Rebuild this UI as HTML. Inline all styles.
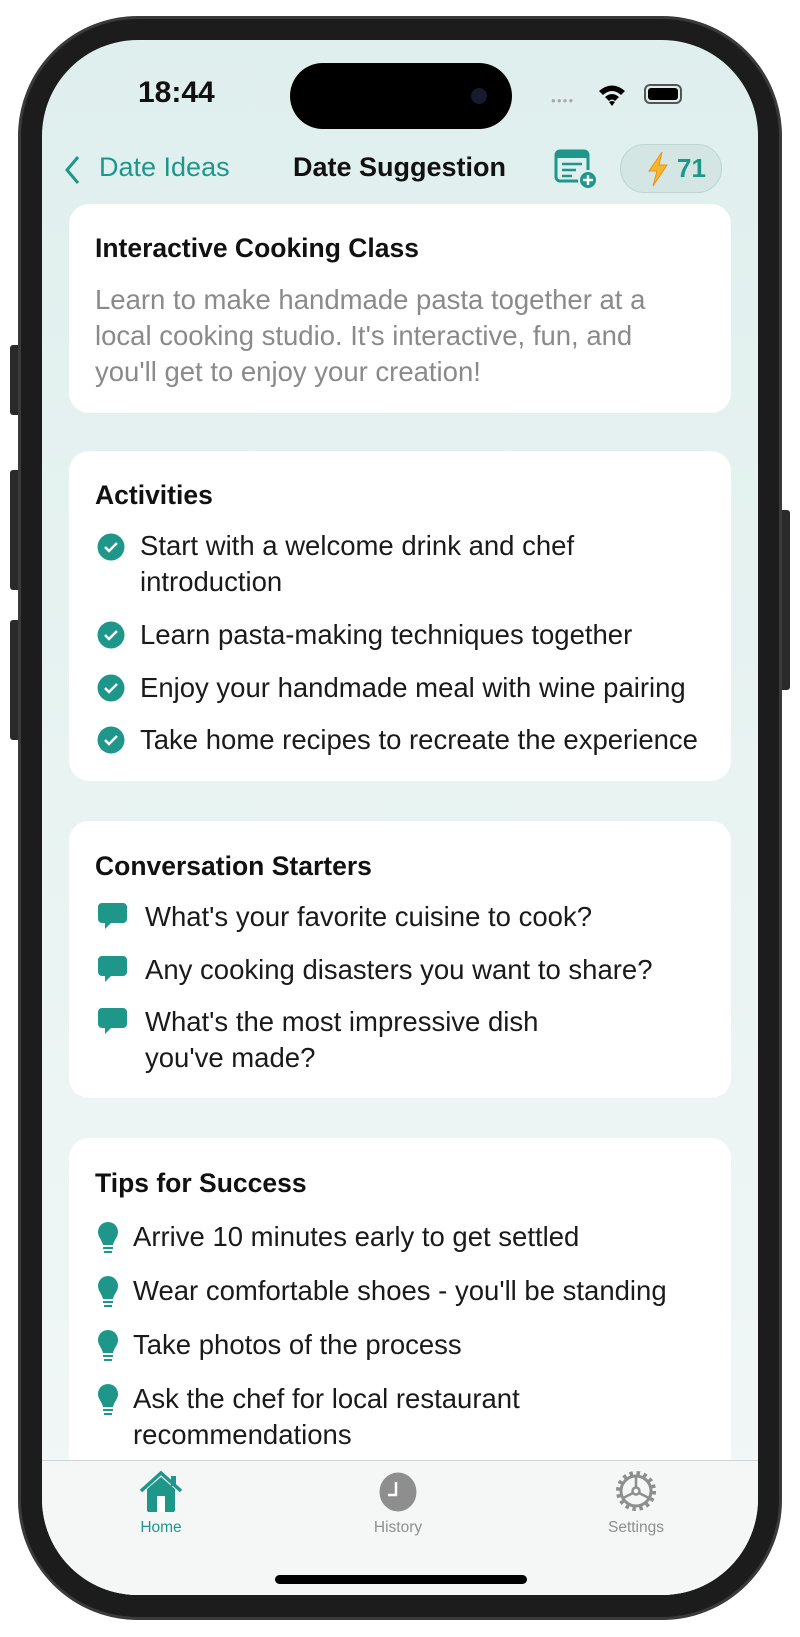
<!DOCTYPE html>
<html><head><meta charset="utf-8"><style>
*{margin:0;padding:0;box-sizing:border-box}
body{width:800px;height:1637px;background:#fff;position:relative;overflow:hidden;font-family:"Liberation Sans",sans-serif;color:#111}
.frame{position:absolute;left:18px;top:16px;width:764px;height:1604px;border-radius:120px;background:#1c1c1c;border:3px solid #3a3a3a}
.screen{position:absolute;left:42px;top:40px;width:716px;height:1555px;border-radius:96px;overflow:hidden;background:linear-gradient(#dfefed,#eef6f5 80%,#f3f7f7)}
.a{position:absolute;white-space:nowrap}
.card{position:absolute;left:27px;width:662px;background:#fff;border-radius:20px}
.t{position:absolute;left:53px;font-size:26.5px;font-weight:bold}
.i{position:absolute;font-size:27.5px;line-height:36px;color:#1a1a1a;white-space:nowrap}
.btn{position:absolute;width:12px;background:#2a2a2a;border-radius:3px}
.lab{position:absolute;width:120px;text-align:center;font-size:15.5px;top:1479px}
</style></head><body>
<div class="btn" style="left:10px;top:345px;height:70px"></div>
<div class="btn" style="left:10px;top:470px;height:120px"></div>
<div class="btn" style="left:10px;top:620px;height:120px"></div>
<div class="btn" style="left:778px;top:510px;height:180px"></div>
<div class="frame"></div>
<div class="screen">
 <div class="a" style="left:96px;top:36px;font-size:30px;font-weight:bold">18:44</div>
 <div class="a" style="left:248px;top:23px;width:222px;height:66px;border-radius:33px;background:#000"></div>
 <div class="a" style="left:429px;top:48px;width:16px;height:16px;border-radius:8px;background:#1a1a2e"></div>
 <div class="a" style="left:509px;top:56px;font-size:8px;color:#aaa;letter-spacing:1px">●●●●</div>
 <svg class="a" style="left:555px;top:43px" width="30" height="24" viewBox="0 0 30 24"><path d="M2 8 Q15 -3 28 8 L24 12 Q15 4 6 12Z M8 14 Q15 8 22 14 L18 18 Q15 15 12 18Z M15 23 L12 19 Q15 17 18 19Z" fill="#000"/></svg>
 <div class="a" style="left:602px;top:44px;width:38px;height:20px;border:2px solid #555;border-radius:6px;padding:2px"><div style="width:100%;height:100%;background:#000;border-radius:3px"></div></div>
 <svg class="a" style="left:22px;top:115px" width="18" height="30"><path d="M14 2 L3 15 L14 28" stroke="#1f968a" stroke-width="3" fill="none"/></svg>
 <div class="a" style="left:57px;top:112px;font-size:27px;color:#1f968a">Date Ideas</div>
 <div class="a" style="left:251px;top:112px;font-size:27px;font-weight:bold">Date Suggestion</div>
 <svg class="a" style="left:512px;top:108px" width="46" height="42"><rect x="2" y="3" width="32" height="30" rx="4" fill="none" stroke="#1f968a" stroke-width="3"/><rect x="2" y="3" width="32" height="7" fill="#1f968a"/><path d="M8 16h20M8 22h14M8 28h10" stroke="#1f968a" stroke-width="2.5"/><circle cx="34" cy="32" r="9" fill="#1f968a" stroke="#dfefed" stroke-width="2"/><path d="M34 27v10M29 32h10" stroke="#fff" stroke-width="2.5"/></svg>
 <div class="a" style="left:578px;top:104px;width:102px;height:49px;border-radius:25px;background:#d3e6e3;border:1.5px solid #bcd6d2"></div>
 <svg class="a" style="left:604px;top:111px" width="24" height="36"><path d="M16 1 L3 20 L11 20 L7 35 L21 14 L13 14Z" fill="#f8b62a" stroke="#e8901a" stroke-width="1"/></svg>
 <div class="a" style="left:635px;top:113px;font-size:26px;font-weight:bold;color:#1f968a">71</div>

 <div class="card" style="top:164px;height:209px"></div>
 <div class="t" style="top:193px">Interactive Cooking Class</div>
 <div class="i" style="left:53px;top:242px;color:#8a8a8a;white-space:normal;width:570px">Learn to make handmade pasta together at a local cooking studio. It's interactive, fun, and you'll get to enjoy your creation!</div>

 <div class="card" style="top:411px;height:330px"></div>
 <div class="t" style="top:440px">Activities</div>

 <div class="card" style="top:781px;height:277px"></div>
 <div class="t" style="top:811px">Conversation Starters</div>

 <div class="card" style="top:1098px;height:500px"></div>
 <div class="t" style="top:1128px">Tips for Success</div>

 <svg class="a" style="left:55px;top:493px" width="28" height="28"><circle cx="14" cy="14" r="13.5" fill="#1f968a"/><path d="M8 14l4 4 8-8" stroke="#fff" stroke-width="2.5" fill="none"/></svg>
 <div class="i" style="left:98px;top:488px">Start with a welcome drink and chef<br>introduction</div>
 <svg class="a" style="left:55px;top:581px" width="28" height="28"><circle cx="14" cy="14" r="13.5" fill="#1f968a"/><path d="M8 14l4 4 8-8" stroke="#fff" stroke-width="2.5" fill="none"/></svg>
 <div class="i" style="left:98px;top:577px">Learn pasta-making techniques together</div>
 <svg class="a" style="left:55px;top:634px" width="28" height="28"><circle cx="14" cy="14" r="13.5" fill="#1f968a"/><path d="M8 14l4 4 8-8" stroke="#fff" stroke-width="2.5" fill="none"/></svg>
 <div class="i" style="left:98px;top:630px">Enjoy your handmade meal with wine pairing</div>
 <svg class="a" style="left:55px;top:686px" width="28" height="28"><circle cx="14" cy="14" r="13.5" fill="#1f968a"/><path d="M8 14l4 4 8-8" stroke="#fff" stroke-width="2.5" fill="none"/></svg>
 <div class="i" style="left:98px;top:682px">Take home recipes to recreate the experience</div>

 <svg class="a" style="left:55px;top:862px" width="32" height="30"><path d="M5 1h21a4 4 0 0 1 4 4v12a4 4 0 0 1-4 4H14l-6 6v-6H5a4 4 0 0 1-4-4V5a4 4 0 0 1 4-4z" fill="#1f968a"/></svg>
 <div class="i" style="left:103px;top:859px">What's your favorite cuisine to cook?</div>
 <svg class="a" style="left:55px;top:915px" width="32" height="30"><path d="M5 1h21a4 4 0 0 1 4 4v12a4 4 0 0 1-4 4H14l-6 6v-6H5a4 4 0 0 1-4-4V5a4 4 0 0 1 4-4z" fill="#1f968a"/></svg>
 <div class="i" style="left:103px;top:912px">Any cooking disasters you want to share?</div>
 <svg class="a" style="left:55px;top:967px" width="32" height="30"><path d="M5 1h21a4 4 0 0 1 4 4v12a4 4 0 0 1-4 4H14l-6 6v-6H5a4 4 0 0 1-4-4V5a4 4 0 0 1 4-4z" fill="#1f968a"/></svg>
 <div class="i" style="left:103px;top:964px">What's the most impressive dish<br>you've made?</div>

 <svg class="a" style="left:55px;top:1181px" width="22" height="34"><path d="M11 1a10 10 0 0 0-10 10c0 5 4 8 5 13h10c1-5 5-8 5-13A10 10 0 0 0 11 1z" fill="#1f968a"/><path d="M6 27h10M7 31h8" stroke="#1f968a" stroke-width="2"/></svg>
 <div class="i" style="left:91px;top:1179px">Arrive 10 minutes early to get settled</div>
 <svg class="a" style="left:55px;top:1235px" width="22" height="34"><path d="M11 1a10 10 0 0 0-10 10c0 5 4 8 5 13h10c1-5 5-8 5-13A10 10 0 0 0 11 1z" fill="#1f968a"/><path d="M6 27h10M7 31h8" stroke="#1f968a" stroke-width="2"/></svg>
 <div class="i" style="left:91px;top:1233px">Wear comfortable shoes - you'll be standing</div>
 <svg class="a" style="left:55px;top:1289px" width="22" height="34"><path d="M11 1a10 10 0 0 0-10 10c0 5 4 8 5 13h10c1-5 5-8 5-13A10 10 0 0 0 11 1z" fill="#1f968a"/><path d="M6 27h10M7 31h8" stroke="#1f968a" stroke-width="2"/></svg>
 <div class="i" style="left:91px;top:1287px">Take photos of the process</div>
 <svg class="a" style="left:55px;top:1343px" width="22" height="34"><path d="M11 1a10 10 0 0 0-10 10c0 5 4 8 5 13h10c1-5 5-8 5-13A10 10 0 0 0 11 1z" fill="#1f968a"/><path d="M6 27h10M7 31h8" stroke="#1f968a" stroke-width="2"/></svg>
 <div class="i" style="left:91px;top:1341px">Ask the chef for local restaurant<br>recommendations</div>

 <div class="a" style="left:0;top:1420px;width:716px;height:140px;background:#f5f7f7;border-top:1px solid #d0d4d4"></div>
 <svg class="a" style="left:96px;top:1431px" width="46" height="42"><path d="M3 20 L23 2 L43 20" stroke="#1f968a" stroke-width="3.5" fill="none"/><rect x="33" y="5" width="5" height="10" fill="#1f968a"/><path d="M9 18 L23 6 L37 18 V39 a2 2 0 0 1-2 2 H11 a2 2 0 0 1-2-2Z" fill="#1f968a"/><rect x="19" y="25" width="8" height="16" fill="#fff"/></svg>
 <div class="lab" style="left:59px;color:#1f968a">Home</div>
 <svg class="a" style="left:337px;top:1432px" width="38" height="40"><ellipse cx="19" cy="20" rx="18.5" ry="19.5" fill="#8e8e8e"/><path d="M17 10v13h-8" stroke="#fff" stroke-width="2.5" fill="none"/></svg>
 <div class="lab" style="left:296px;color:#8e8e8e">History</div>
 <svg class="a" style="left:573px;top:1430px" width="42" height="42" viewBox="0 0 42 42"><g stroke="#8e8e8e" fill="none"><circle cx="21" cy="21" r="15" stroke-width="3"/><circle cx="21" cy="21" r="18" stroke-width="4" stroke-dasharray="3.5 3.6"/><circle cx="21" cy="21" r="3.5" stroke-width="2.5"/><path d="M21 17.5V6M24 23l10 5M18 23L8 28" stroke-width="2.5"/></g></svg>
 <div class="lab" style="left:534px;color:#8e8e8e">Settings</div>
 <div class="a" style="left:233px;top:1535px;width:252px;height:9px;border-radius:5px;background:#000"></div>
</div>
</body></html>
